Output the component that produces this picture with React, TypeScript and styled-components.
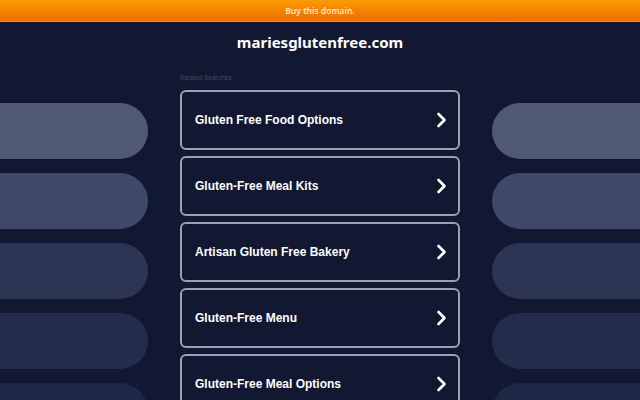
import styled, { createGlobalStyle } from 'styled-components'

const GlobalStyle = createGlobalStyle`
  html, body {
    margin: 0;
    padding: 0;
    background: #121831;
  }
  body {
    font-family: 'Liberation Sans', Arial, sans-serif;
  }
`

const searches = [
  'Gluten Free Food Options',
  'Gluten-Free Meal Kits',
  'Artisan Gluten Free Bakery',
  'Gluten-Free Menu',
  'Gluten-Free Meal Options',
]

const pillColors = ['#4f5976', '#3e4868', '#2c3553', '#232c4a', '#1f2847']

const Page = styled.div`
  width: 640px;
  height: 400px;
  overflow: hidden;
  background: #121831;
  display: flex;
  flex-direction: column;
  & > * {
    flex-shrink: 0;
  }
`

const TopBar = styled.div`
  height: 21px;
  background: linear-gradient(#f89c02, #f06b00);
  border-bottom: 1px solid #d89a62;
  display: flex;
  align-items: center;
  justify-content: center;
  font-family: 'Noto Sans', sans-serif;
  font-size: 8.5px;
  font-weight: 600;
  color: #fde8c6;
`

const Title = styled.h1`
  margin: 0;
  height: 40px;
  display: flex;
  align-items: center;
  justify-content: center;
  font-family: 'Noto Sans', sans-serif;
  font-size: 15px;
  font-weight: 700;
  color: #ffffff;
`

const Body = styled.div`
  display: grid;
  grid-template-columns: 148px 280px 148px;
  column-gap: 32px;
`

const PillColumn = styled.div<{ $side: 'left' | 'right' }>`
  display: flex;
  flex-direction: column;
  gap: 14px;
  padding-top: 41px;
  align-items: ${({ $side }) => ($side === 'left' ? 'flex-end' : 'flex-start')};
`

const Pill = styled.div<{ $color: string; $side: 'left' | 'right' }>`
  width: 148px;
  height: 56px;
  flex-shrink: 0;
  background: ${({ $color }) => $color};
  border-radius: ${({ $side }) => ($side === 'left' ? '0 28px 28px 0' : '28px 0 0 28px')};
`

const Center = styled.div`
  display: flex;
  flex-direction: column;
`

const Label = styled.div`
  height: 28px;
  flex-shrink: 0;
  display: flex;
  align-items: center;
  padding-top: 3px;
  box-sizing: border-box;
  font-size: 6.5px;
  color: #434b68;
`

const CardList = styled.div`
  display: flex;
  flex-direction: column;
  gap: 6px;
`

const Card = styled.a`
  box-sizing: border-box;
  height: 60px;
  flex-shrink: 0;
  border: 2px solid #9ca1b1;
  border-radius: 6px;
  padding: 0 11px 0 13px;
  display: flex;
  align-items: center;
  justify-content: space-between;
  color: #ffffff;
  font-size: 12px;
  font-weight: 700;
  text-decoration: none;
`

const Chevron = () => (
  <svg width="12" height="16" viewBox="0 0 12 16" fill="none">
    <path
      d="M3.5 2 L9.5 8 L3.5 14"
      stroke="#ffffff"
      strokeWidth="2.6"
      strokeLinecap="round"
      strokeLinejoin="round"
    />
  </svg>
)

export default function App() {
  return (
    <>
      <GlobalStyle />
      <Page>
        <TopBar>Buy this domain.</TopBar>
        <Title>mariesglutenfree.com</Title>
        <Body>
          <PillColumn $side="left">
            {pillColors.map((color) => (
              <Pill key={color} $color={color} $side="left" />
            ))}
          </PillColumn>
          <Center>
            <Label>Related Searches</Label>
            <CardList>
              {searches.map((text) => (
                <Card key={text} href="#">
                  {text}
                  <Chevron />
                </Card>
              ))}
            </CardList>
          </Center>
          <PillColumn $side="right">
            {pillColors.map((color) => (
              <Pill key={color} $color={color} $side="right" />
            ))}
          </PillColumn>
        </Body>
      </Page>
    </>
  )
}
